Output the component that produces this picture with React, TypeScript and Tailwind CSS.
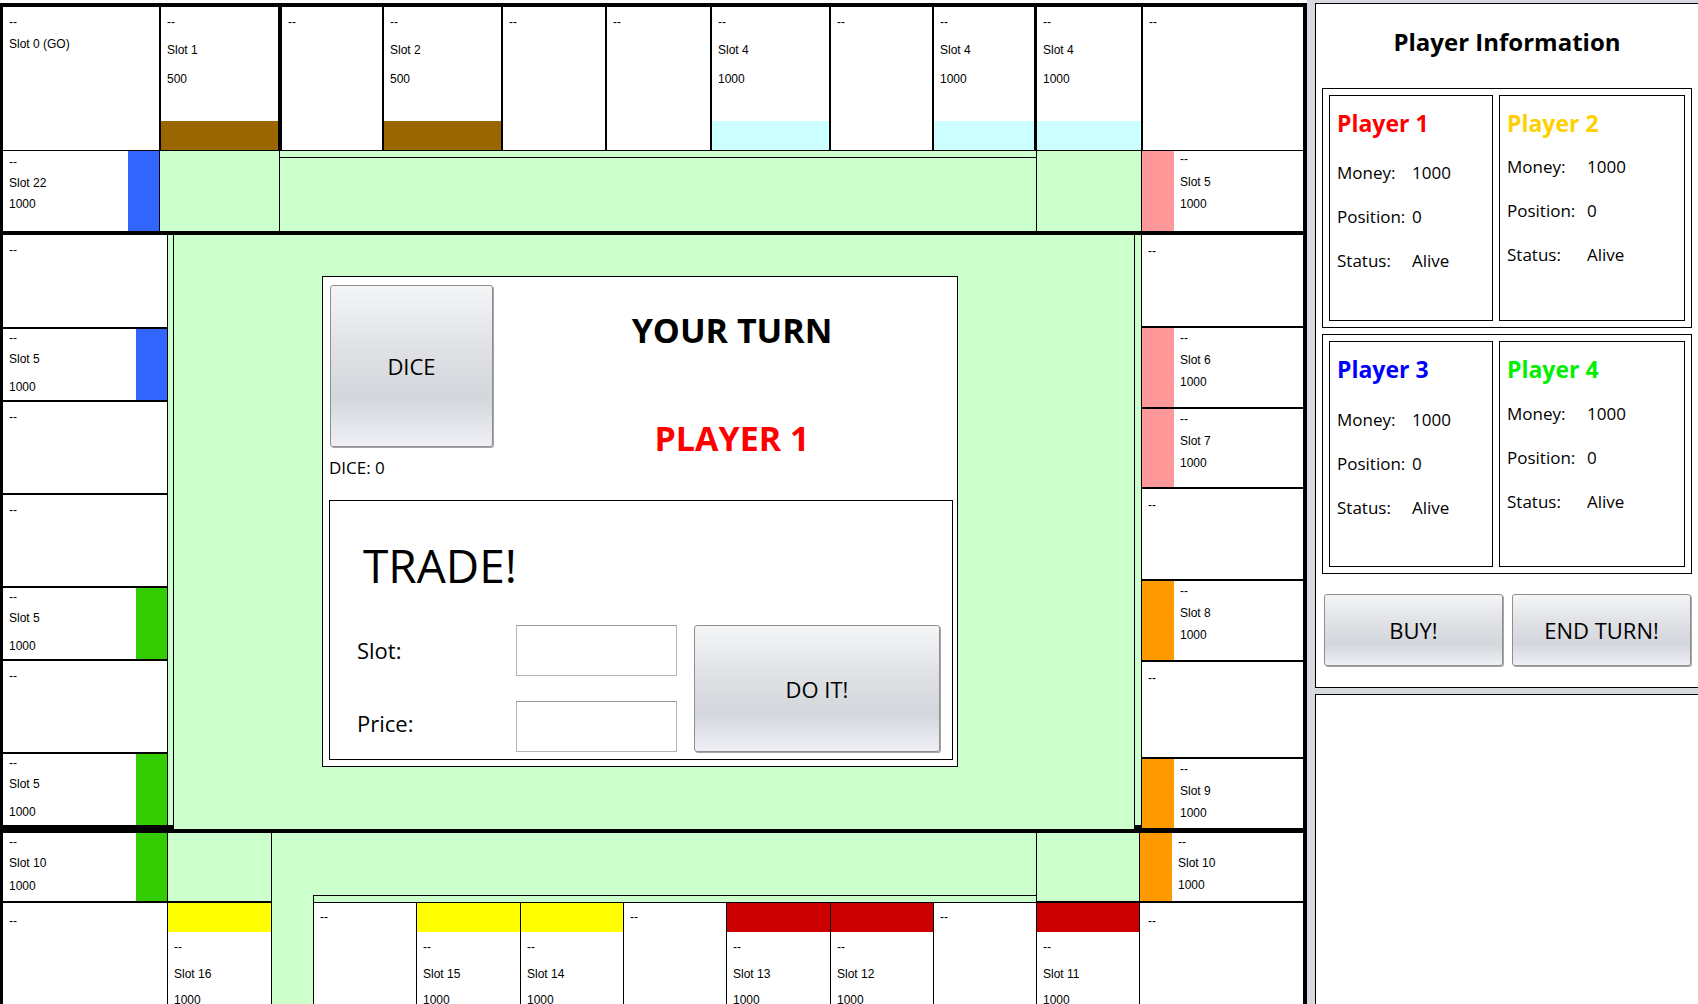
import clsx from 'clsx';

const green = 'bg-[#ccffcc]';
const btn =
  'rounded-[3px] border border-[#8f8f8f] bg-[linear-gradient(to_bottom,#f4f5f7,#dfe1e5_40%,#d3d6db_70%,#eef0f6)] shadow-[1px_1px_0_#a5a5a5] text-[22px] text-black';

type TextProps = { name?: string; price?: string; pt: string; g1?: string; g2?: string };

// stacked "--" / name / price labels used in every board slot
const SlotText = ({ name, price, pt, g1, g2 }: TextProps) => (
  <div className={clsx('min-w-0 flex-1 pl-[6px] whitespace-nowrap', pt)}>
    <p>--</p>
    {name && <p className={g1}>{name}</p>}
    {price && <p className={g2}>{price}</p>}
  </div>
);

const StripCell = ({
  className,
  strip,
  left,
  ...text
}: TextProps & { className: string; strip?: string; left?: boolean }) => (
  <div className={clsx('flex shrink-0 bg-white', className)}>
    {strip && left && <div className={clsx('w-[32px] shrink-0', strip)} />}
    <SlotText {...text} />
    {strip && !left && <div className={clsx('w-[31px] shrink-0', strip)} />}
  </div>
);

const TopCell = ({ className, band, name, price }: { className: string; band?: string; name?: string; price?: string }) => (
  <div className={clsx('flex shrink-0 flex-col bg-white', className)}>
    <SlotText name={name} price={price} pt="pt-[8px]" g1="mt-[14px]" g2="mt-[15px]" />
    {band && <div className={clsx('h-[29px] shrink-0', band)} />}
  </div>
);

const BottomCell = ({ className, band, name }: { className: string; band?: string; name?: string }) => (
  <div className={clsx('flex shrink-0 flex-col bg-white', className)}>
    {band ? (
      <>
        <div className={clsx('h-[29px] shrink-0', band)} />
        <SlotText name={name} price="1000" pt="pt-[8px]" g1="mt-[13px]" g2="mt-[12px]" />
      </>
    ) : (
      <SlotText pt="pt-[7px]" />
    )}
  </div>
);

const LeftCell = ({ h, strip }: { h: string; strip?: string }) =>
  strip ? (
    <StripCell className={h} strip={strip} name="Slot 5" price="1000" pt="pt-[2px]" g1="mt-[7px]" g2="mt-[14px]" />
  ) : (
    <StripCell className={h} pt="pt-[8px]" />
  );

const RightCell = ({ h, strip, name }: { h: string; strip?: string; name?: string }) =>
  strip ? (
    <StripCell className={h} strip={strip} left name={name} price="1000" pt="pt-[3px]" g1="mt-[8px]" g2="mt-[8px]" />
  ) : (
    <StripCell className={h} pt="pt-[9px]" />
  );

const players = [
  { name: 'Player 1', color: 'text-[#ff0000]', w: 'w-[164px]', label: 'w-[75px]', mt: 'mt-[22px]' },
  { name: 'Player 2', color: 'text-[#ffd000]', w: 'w-[186px]', label: 'w-[80px]', mt: 'mt-[16px]' },
  { name: 'Player 3', color: 'text-[#0000ff]', w: 'w-[164px]', label: 'w-[75px]', mt: 'mt-[23px]' },
  { name: 'Player 4', color: 'text-[#00f000]', w: 'w-[186px]', label: 'w-[80px]', mt: 'mt-[17px]' },
];

const PlayerCard = ({ p }: { p: (typeof players)[number] }) => (
  <div className={clsx('h-full shrink-0 border border-black bg-white pl-[7px] pt-[12px]', p.w)}>
    <p className={clsx('text-[23px] font-bold leading-[30px]', p.color)}>{p.name}</p>
    <div className={clsx('flex flex-col gap-[18px] text-[17px] leading-[26px]', p.mt)}>
      <div className="flex">
        <span className={p.label}>Money:</span>
        <span>1000</span>
      </div>
      <div className="flex">
        <span className={p.label}>Position:</span>
        <span>0</span>
      </div>
      <div className="flex">
        <span className={p.label}>Status:</span>
        <span>Alive</span>
      </div>
    </div>
  </div>
);

const CenterPanel = () => (
  <div className="flex h-[491px] w-[636px] flex-col border border-black bg-white font-['Open_Sans',sans-serif] text-black">
    <div className="flex h-[223px] shrink-0">
      <div className="ml-[7px] mt-[8px] flex w-[164px] flex-col">
        <button className={clsx('h-[162px] w-[163px]', btn)}>DICE</button>
        <p className="-ml-[1px] mt-[9px] text-[17px] leading-[24px]">DICE: 0</p>
      </div>
      <div className="flex flex-1 flex-col items-center pl-[13px]">
        <p className="mt-[31px] text-[34px] font-bold leading-[44px]">YOUR TURN</p>
        <p className="mt-[64px] text-[34px] font-bold leading-[44px] text-[#ff0000]">PLAYER 1</p>
      </div>
    </div>
    <div className="ml-[6px] flex h-[260px] w-[624px] flex-col border border-black">
      <p className="ml-[33px] mt-[36px] text-[46px] leading-[56px]">TRADE!</p>
      <div className="mt-[32px] flex h-[127px]">
        <div className="ml-[27px] flex w-[159px] flex-col text-[22px] leading-[30px]">
          <p className="mt-[10px]">Slot:</p>
          <p className="mt-[43px]">Price:</p>
        </div>
        <div className="flex w-[161px] flex-col">
          <input className="h-[51px] w-full border border-[#b5b5b5] border-t-[#9a9a9a] bg-white" />
          <input className="mt-[25px] h-[51px] w-full border border-[#b5b5b5] border-t-[#9a9a9a] bg-white" />
        </div>
        <button className={clsx('ml-[17px] h-[127px] w-[246px]', btn)}>DO IT!</button>
      </div>
    </div>
  </div>
);

export default function App() {
  return (
    <div className="flex h-[1004px] w-[1698px] overflow-hidden bg-[#d6d9de]">
      {/* Board */}
      <div className="shrink-0 bg-white pt-[3px]">
        <div className="flex h-[1060px] w-[1307px] flex-col border-l-[3px] border-r-[4px] border-t-[4px] border-black bg-black font-['Liberation_Sans',Arial,sans-serif] text-[12px] leading-[14px] text-black">
          {/* top row */}
          <div className="flex h-[143px] shrink-0">
            <div className="w-[156px] shrink-0 bg-white">
              <SlotText name="Slot 0 (GO)" pt="pt-[8px]" g1="mt-[8px]" />
            </div>
            <TopCell className="ml-[2px] w-[117px]" name="Slot 1" price="500" band="bg-[#996600]" />
            <TopCell className="ml-[4px] w-[100px]" />
            <TopCell className="ml-[2px] w-[117px]" name="Slot 2" price="500" band="bg-[#996600]" />
            <TopCell className="ml-[2px] w-[102px]" />
            <TopCell className="ml-[2px] w-[103px]" />
            <TopCell className="ml-[2px] w-[117px]" name="Slot 4" price="1000" band="bg-[#ccffff]" />
            <TopCell className="ml-[2px] w-[101px]" />
            <TopCell className="ml-[2px] w-[100px]" name="Slot 4" price="1000" band="bg-[#ccffff]" />
            <TopCell className="ml-[3px] w-[104px]" name="Slot 4" price="1000" band="bg-[#ccffff]" />
            <TopCell className="ml-[2px] flex-1" />
          </div>
          <div className="mt-[1px] flex h-[80px] shrink-0">
            <StripCell className="w-[156px]" strip="bg-[#3366ff]" name="Slot 22" price="1000" pt="pt-[4px]" g1="mt-[7px]" g2="mt-[7px]" />
            <div className={clsx('ml-[1px] w-[119px] shrink-0', green)} />
            <div className={clsx('ml-[1px] flex w-[756px] shrink-0 flex-col', green)}>
              <div className="h-[7px] border-b border-black" />
            </div>
            <div className={clsx('ml-[1px] w-[104px] shrink-0', green)} />
            <StripCell className="ml-[1px] flex-1" strip="bg-[#ff9999]" left name="Slot 5" price="1000" pt="pt-[1px]" g1="mt-[9px]" g2="mt-[8px]" />
          </div>

          {/* middle */}
          <div className="mt-[4px] flex h-[594px] shrink-0">
            <div className="flex w-[164px] shrink-0 flex-col gap-[2px]">
              <LeftCell h="h-[92px]" />
              <LeftCell h="h-[71px]" strip="bg-[#3366ff]" />
              <LeftCell h="h-[91px]" />
              <LeftCell h="h-[91px]" />
              <LeftCell h="h-[71px]" strip="bg-[#33cc00]" />
              <LeftCell h="h-[91px]" />
              <LeftCell h="h-[71px]" strip="bg-[#33cc00]" />
            </div>
            <div className={clsx('ml-[1px] h-[590px] w-[5px] shrink-0', green)} />
            <div className={clsx('ml-[1px] w-[960px] shrink-0 pl-[148px] pt-[41px]', green)}>
              <CenterPanel />
            </div>
            <div className={clsx('ml-[1px] h-[590px] w-[6px] shrink-0', green)} />
            <div className="ml-[1px] flex flex-1 flex-col gap-[2px]">
              <RightCell h="h-[91px]" />
              <RightCell h="h-[79px]" strip="bg-[#ff9999]" name="Slot 6" />
              <RightCell h="h-[78px]" strip="bg-[#ff9999]" name="Slot 7" />
              <RightCell h="h-[90px]" />
              <RightCell h="h-[79px]" strip="bg-[#ff9900]" name="Slot 8" />
              <RightCell h="h-[95px]" />
              <RightCell h="h-[69px]" strip="bg-[#ff9900]" name="Slot 9" />
            </div>
          </div>

          {/* bottom */}
          <div className="mt-[4px] flex flex-1">
            <div className="flex w-[164px] shrink-0 flex-col">
              <StripCell className="h-[68px]" strip="bg-[#33cc00]" name="Slot 10" price="1000" pt="pt-[2px]" g1="mt-[7px]" g2="mt-[9px]" />
              <div className="mt-[2px] flex-1 bg-white pt-[11px] pl-[6px]">--</div>
            </div>
            <div className="ml-[1px] flex w-[103px] shrink-0 flex-col">
              <div className={clsx('h-[68px] shrink-0', green)} />
              <BottomCell className="mt-[2px] flex-1" band="bg-[#ffff00]" name="Slot 16" />
            </div>
            <div className={clsx('ml-[1px] flex w-[764px] shrink-0 flex-col', green)}>
              <div className="h-[62px] shrink-0" />
              <div className="ml-[41px] h-[8px] shrink-0 border border-r-0 border-black" />
              <div className="ml-[41px] flex flex-1 gap-[1px] bg-black pl-[1px]">
                <BottomCell className="w-[102px]" />
                <BottomCell className="w-[103px]" band="bg-[#ffff00]" name="Slot 15" />
                <BottomCell className="w-[102px]" band="bg-[#ffff00]" name="Slot 14" />
                <BottomCell className="w-[102px]" />
                <BottomCell className="w-[103px]" band="bg-[#cc0000]" name="Slot 13" />
                <BottomCell className="w-[102px]" band="bg-[#cc0000]" name="Slot 12" />
                <BottomCell className="w-[102px]" />
              </div>
            </div>
            <div className="ml-[1px] flex w-[102px] shrink-0 flex-col">
              <div className={clsx('h-[68px] shrink-0', green)} />
              <BottomCell className="mt-[2px] flex-1" band="bg-[#cc0000]" name="Slot 11" />
            </div>
            <div className="ml-[1px] flex flex-1 flex-col">
              <StripCell className="h-[68px]" strip="bg-[#ff9900]" left name="Slot 10" price="1000" pt="pt-[2px]" g1="mt-[7px]" g2="mt-[8px]" />
              <div className="mt-[2px] flex-1 bg-white pt-[11px] pl-[8px]">--</div>
            </div>
          </div>
        </div>
      </div>

      {/* Player info panel */}
      <div className="ml-[8px] flex w-[383px] shrink-0 flex-col pt-[3px] font-['Open_Sans',sans-serif] text-black">
        <div className="flex h-[685px] shrink-0 flex-col border-y border-l border-black bg-white">
          <h2 className="mt-[22px] text-center text-[24px] font-bold leading-[32px]">Player Information</h2>
          <div className="ml-[6px] mt-[30px] flex h-[240px] w-[370px] gap-[6px] border border-black p-[6px]">
            <PlayerCard p={players[0]} />
            <PlayerCard p={players[1]} />
          </div>
          <div className="ml-[6px] mt-[6px] flex h-[240px] w-[370px] gap-[6px] border border-black p-[6px]">
            <PlayerCard p={players[2]} />
            <PlayerCard p={players[3]} />
          </div>
          <div className="ml-[8px] mt-[20px] flex gap-[9px]">
            <button className={clsx('h-[72px] w-[179px]', btn)}>BUY!</button>
            <button className={clsx('h-[72px] w-[179px]', btn)}>END TURN!</button>
          </div>
        </div>
        <div className="mt-[6px] flex-1 border-l border-t border-black bg-white" />
      </div>
    </div>
  );
}
